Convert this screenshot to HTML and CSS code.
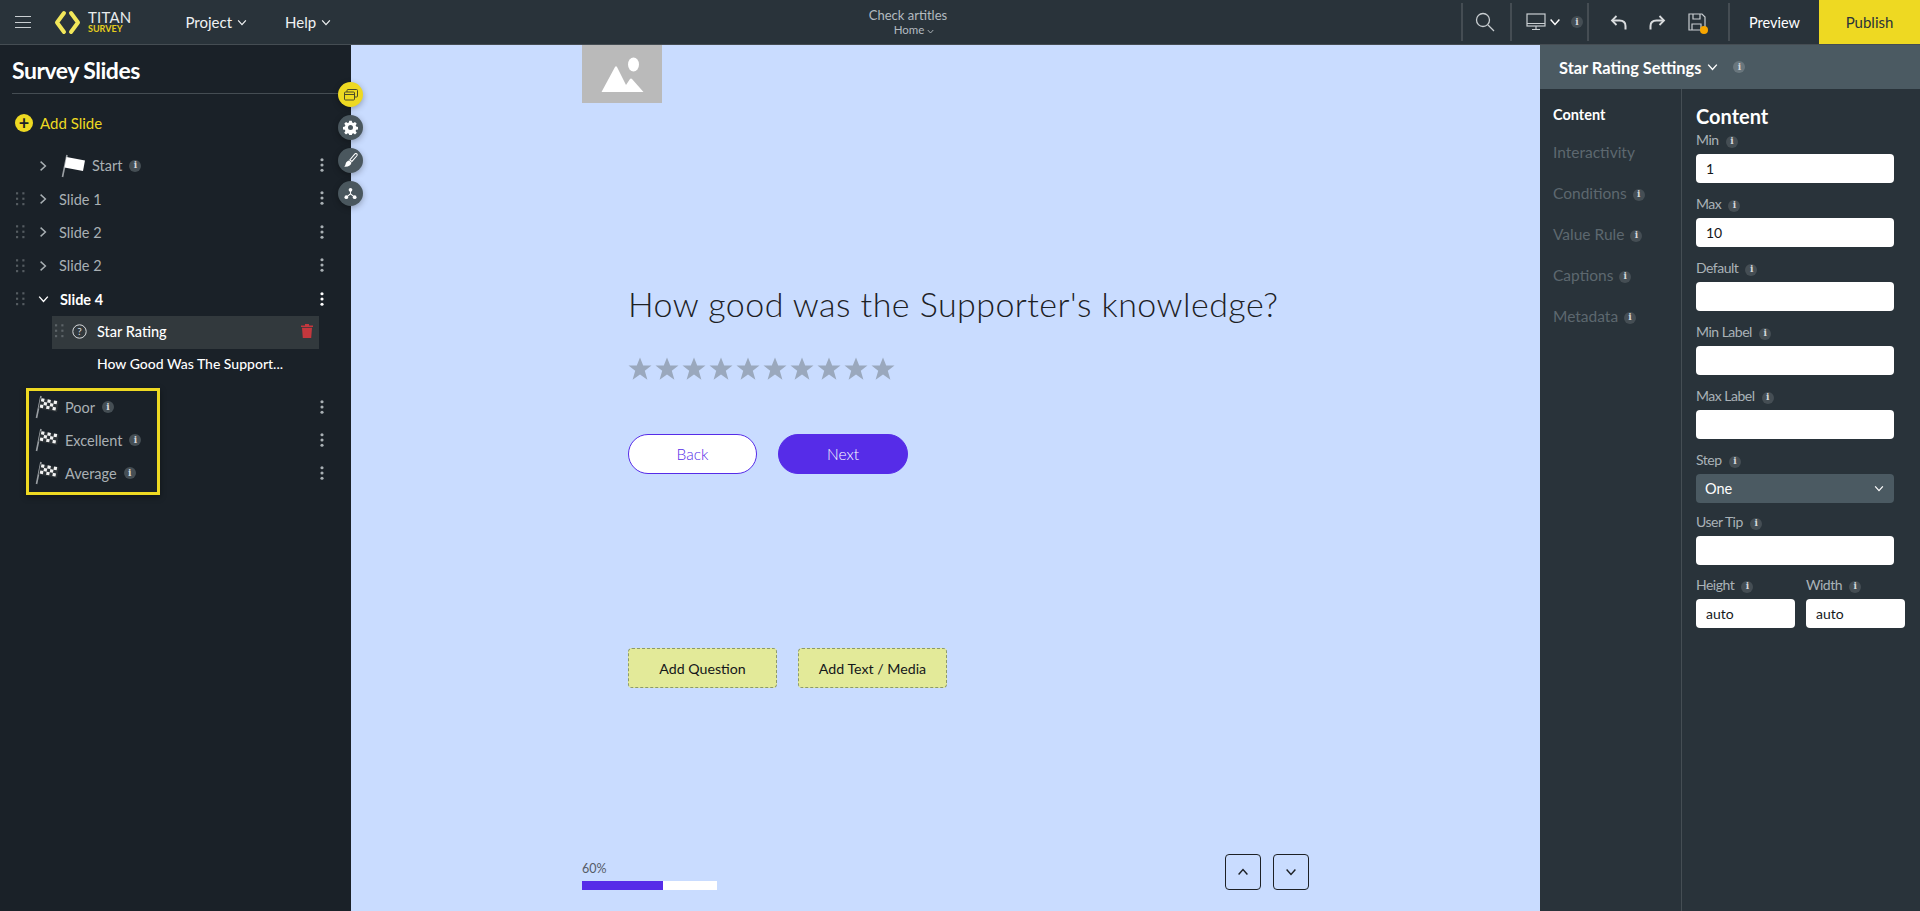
FILE: index.html
```html
<!DOCTYPE html>
<html lang="en">
<head>
  <meta charset="UTF-8">
  <title>Titan Survey</title>
  <link rel="stylesheet" href="styles.css">
</head>
<body>
  <svg class="sprite" xmlns="http://www.w3.org/2000/svg">
    <symbol id="chev-r" viewBox="0 0 10 14"><path d="M2 1.5 8 7l-6 5.5" fill="none" stroke="currentColor" stroke-width="1.8"/></symbol>
    <symbol id="chev-d" viewBox="0 0 14 10"><path d="M1.5 2 7 8l5.5-6" fill="none" stroke="currentColor" stroke-width="1.8"/></symbol>
    <symbol id="kebab" viewBox="0 0 4 16"><circle cx="2" cy="2" r="1.8" fill="currentColor"/><circle cx="2" cy="8" r="1.8" fill="currentColor"/><circle cx="2" cy="14" r="1.8" fill="currentColor"/></symbol>
    <symbol id="grip" viewBox="0 0 10 15"><g fill="currentColor"><rect x="0" y="0" width="2.4" height="2.4"/><rect x="7" y="0" width="2.4" height="2.4"/><rect x="0" y="6" width="2.4" height="2.4"/><rect x="7" y="6" width="2.4" height="2.4"/><rect x="0" y="12" width="2.4" height="2.4"/><rect x="7" y="12" width="2.4" height="2.4"/></g></symbol>
    <symbol id="star" viewBox="0 0 24 24"><path d="M12 .5l3.2 8h8.3l-6.700 5.300 2.600 8.900L12 17.600l-7.400 5.100 2.600-8.900L.5 8.500h8.300z" fill="currentColor"/></symbol>
    <symbol id="flag-check" viewBox="0 0 24 24">
      <path d="M1.5 23 6 1" stroke="#9a9fa3" stroke-width="1.6" fill="none"/>
      <path d="M5.5 3 24 6.500l-2 10.500L3.500 13.500z" fill="#2d3337"/>
      <g transform="translate(5.5 3) rotate(10.5)" fill="#f2f2f2">
        <rect x="1" y="0" width="3.2" height="3.2"/><rect x="7.4" y="0" width="3.2" height="3.2"/><rect x="13.8" y="0" width="3.2" height="3.2"/>
        <rect x="4.2" y="3.2" width="3.2" height="3.2"/><rect x="10.6" y="3.2" width="3.2" height="3.2"/>
        <rect x="1" y="6.4" width="3.2" height="3.2"/><rect x="7.4" y="6.4" width="3.2" height="3.2"/><rect x="13.8" y="6.4" width="3.2" height="3.2"/>
      </g>
    </symbol>
  </svg>

  <header class="topbar">
    <div class="topbar-left">
      <button class="burger"><span></span><span></span><span></span></button>
      <div class="logo">
        <svg width="27" height="25" viewBox="0 0 27 25" fill="none" stroke="#f2e75a" stroke-width="4" stroke-linejoin="round" stroke-linecap="round"><path d="M10 3 3 12.500 10 22"/><path d="M17 3l7 9.500L17 22"/></svg>
        <div class="logo-text"><span class="logo-titan">TITAN</span><span class="logo-survey">SURVEY</span></div>
      </div>
      <nav class="menu">
        <a class="menu-item">Project <svg width="10" height="7"><use href="#chev-d"/></svg></a>
        <a class="menu-item">Help <svg width="10" height="7"><use href="#chev-d"/></svg></a>
      </nav>
    </div>
    <div class="doc-title">
      <div class="doc-name">Check artitles</div>
      <div class="doc-page">Home <svg width="7" height="5"><use href="#chev-d"/></svg></div>
    </div>
    <div class="tools">
      <div class="tool tool-search">
        <svg width="20" height="20" viewBox="0 0 20 20" fill="none" stroke="#c9ced1" stroke-width="1.3"><circle cx="8" cy="8" r="6.5"/><path d="M13 13l6 6"/></svg>
      </div>
      <div class="tool tool-device">
        <svg width="20" height="18" viewBox="0 0 20 18" fill="none" stroke="#c9ced1" stroke-width="1.2"><rect x="1" y="1" width="18" height="12"/><path d="M1 10.500h18M10 13v3M6 16.500h8"/></svg>
        <svg class="device-chev" width="12" height="8"><use href="#chev-d"/></svg>
        <span class="info">i</span>
      </div>
      <div class="tool tool-edit">
        <svg width="17" height="15" viewBox="0 0 17 15" fill="none" stroke="#d9dcde" stroke-width="2"><path d="M15.500 14.500V11c0-3.500-2.500-5.500-6-5.500H2.500"/><path d="M6.500 1 2 5.500 6.500 10" stroke-width="1.8"/></svg>
        <svg width="17" height="15" viewBox="0 0 17 15" fill="none" stroke="#d9dcde" stroke-width="2"><path d="M1.500 14.500V11c0-3.500 2.500-5.500 6-5.500h7"/><path d="M10.500 1 15 5.500 10.500 10" stroke-width="1.8"/></svg>
        <div class="save-icon">
          <svg width="18" height="18" viewBox="0 0 18 18" fill="none" stroke="#c9ced1" stroke-width="1.2"><path d="M1 1h13l3 3v13H1z"/><path d="M5 1v5h7V1M4 17v-6h9v6"/></svg>
          <span class="save-dot"></span>
        </div>
      </div>
      <div class="preview">Preview</div>
      <div class="publish">Publish</div>
    </div>
  </header>

  <main class="workspace">
    <aside class="sidebar">
      <h2 class="side-title">Survey Slides</h2>
      <div class="add-slide">
        <span class="add-dot">+</span>
        Add Slide
      </div>

      <ul class="tree">
        <li class="row">
          <span class="grip-space"></span>
          <svg class="chev" width="8" height="12"><use href="#chev-r"/></svg>
          <svg class="start-flag" width="24" height="24" viewBox="0 0 24 24"><path d="M1.500 23 6 1" stroke="#9a9fa3" stroke-width="1.6" fill="none"/><path d="M5.500 3 24 6.500l-2 10.500L3.500 13.500z" fill="#fff"/></svg>
          <span class="label start-label">Start</span>
          <span class="info">i</span>
          <svg class="kebab" width="4" height="14"><use href="#kebab"/></svg>
        </li>
        <li class="row">
          <svg class="grip" width="9" height="14"><use href="#grip"/></svg>
          <svg class="chev" width="8" height="12"><use href="#chev-r"/></svg>
          <span class="label slide-label">Slide 1</span>
          <svg class="kebab" width="4" height="14"><use href="#kebab"/></svg>
        </li>
        <li class="row">
          <svg class="grip" width="9" height="14"><use href="#grip"/></svg>
          <svg class="chev" width="8" height="12"><use href="#chev-r"/></svg>
          <span class="label slide-label">Slide 2</span>
          <svg class="kebab" width="4" height="14"><use href="#kebab"/></svg>
        </li>
        <li class="row">
          <svg class="grip" width="9" height="14"><use href="#grip"/></svg>
          <svg class="chev" width="8" height="12"><use href="#chev-r"/></svg>
          <span class="label slide-label">Slide 2</span>
          <svg class="kebab" width="4" height="14"><use href="#kebab"/></svg>
        </li>
        <li class="row row-open">
          <svg class="grip" width="9" height="14"><use href="#grip"/></svg>
          <svg class="chev-open" width="11" height="8"><use href="#chev-d"/></svg>
          <span class="label slide-label">Slide 4</span>
          <svg class="kebab" width="4" height="14"><use href="#kebab"/></svg>
        </li>
        <li class="question-row">
          <svg class="grip" width="9" height="14"><use href="#grip"/></svg>
          <svg class="help-icon" width="15" height="15" viewBox="0 0 15 15"><circle cx="7.5" cy="7.5" r="6.7" fill="none" stroke="#d8dbdd" stroke-width="1"/><text x="7.5" y="11" text-anchor="middle" font-size="10" fill="#d8dbdd" font-family="Lato">?</text></svg>
          <span class="question-name">Star Rating</span>
          <svg class="trash" width="12" height="14" viewBox="0 0 12 14" fill="#c4373d"><path d="M0 1.500h12V3H0zM4 0h4v1.500H4zM1 3.800h10L10.200 14H1.800z"/></svg>
        </li>
        <li class="question-text">How Good Was The Support...</li>
        <li class="row row-end">
          <svg class="end-flag" width="24" height="24"><use href="#flag-check"/></svg>
          <span class="label">Poor</span>
          <span class="info">i</span>
          <svg class="kebab" width="4" height="14"><use href="#kebab"/></svg>
        </li>
        <li class="row row-end">
          <svg class="end-flag" width="24" height="24"><use href="#flag-check"/></svg>
          <span class="label">Excellent</span>
          <span class="info">i</span>
          <svg class="kebab" width="4" height="14"><use href="#kebab"/></svg>
        </li>
        <li class="row row-end">
          <svg class="end-flag" width="24" height="24"><use href="#flag-check"/></svg>
          <span class="label">Average</span>
          <span class="info">i</span>
          <svg class="kebab" width="4" height="14"><use href="#kebab"/></svg>
        </li>
      </ul>
      <div class="highlight"></div>

      <div class="float-tools">
        <span class="float-btn float-active">
          <svg width="14" height="13" viewBox="0 0 14 13" fill="none" stroke="#4a4a2a" stroke-width="1"><rect x="0.5" y="4" width="10" height="8" rx="1"/><path d="M3 4V2.500a1 1 0 0 1 1-1h8.500a1 1 0 0 1 1 1V8a1 1 0 0 1-1 1h-2"/><path d="M0.500 6.500h10"/></svg>
        </span>
        <span class="float-btn">
          <svg width="15" height="15" viewBox="0 0 24 24"><path fill="#fff" fill-rule="evenodd" d="M10 1h4l.6 3.100 2 .8 2.600-1.800 2.800 2.800-1.800 2.600.8 2 3 .5v4l-3 .6-.8 2 1.800 2.600-2.800 2.800-2.600-1.800-2 .8-.6 3h-4l-.6-3-2-.8-2.600 1.800-2.800-2.800 1.800-2.600-.8-2-3-.6v-4l3-.5.8-2-1.800-2.600 2.800-2.800 2.600 1.800 2-.8zM12 8a4 4 0 1 0 0 8 4 4 0 0 0 0-8z"/></svg>
        </span>
        <span class="float-btn">
          <svg width="15" height="15" viewBox="0 0 16 16"><path d="M14.500.8c.8.500.8 1.400.3 2.100L9.500 9 7.300 7.300 12.500 1.200c.5-.6 1.300-.8 2-.4z" fill="none" stroke="#fff" stroke-width="1.1"/><path d="M6.600 8 9 10c-.3 2.800-3 5-8 4.500 1.500-.8 1.500-2 2-3.500.5-1.500 2-2.700 3.600-3z" fill="#fff"/></svg>
        </span>
        <span class="float-btn">
          <svg width="13" height="13" viewBox="0 0 14 14" fill="#fff"><circle cx="7" cy="3" r="2"/><circle cx="2.5" cy="11" r="2"/><circle cx="11.5" cy="11" r="2"/><path d="M6.500 4h1v3l3.500 3-.7.700L7 8 3.700 10.700 3 10l3.500-3z"/></svg>
        </span>
      </div>
    </aside>

    <section class="canvas">
      <div class="img-holder">
        <svg width="44" height="38" viewBox="0 0 44 38" fill="#fff"><ellipse cx="33.5" cy="9.5" rx="5.5" ry="7"/><path d="M1.500 37 15 12c.5-1 1.500-1 2 0l9 18 4-6c.5-.8 1.500-.8 2 0l11.500 13z"/></svg>
      </div>
      <div class="survey">
        <h1 class="question">How good was the Supporter's knowledge?</h1>
        <div class="stars">
          <svg width="24" height="24"><use href="#star"/></svg>
          <svg width="24" height="24"><use href="#star"/></svg>
          <svg width="24" height="24"><use href="#star"/></svg>
          <svg width="24" height="24"><use href="#star"/></svg>
          <svg width="24" height="24"><use href="#star"/></svg>
          <svg width="24" height="24"><use href="#star"/></svg>
          <svg width="24" height="24"><use href="#star"/></svg>
          <svg width="24" height="24"><use href="#star"/></svg>
          <svg width="24" height="24"><use href="#star"/></svg>
          <svg width="24" height="24"><use href="#star"/></svg>
        </div>
        <div class="pager">
          <button class="btn-back">Back</button>
          <button class="btn-next">Next</button>
        </div>
        <div class="add-row">
          <button class="btn-add">Add Question</button>
          <button class="btn-add">Add Text / Media</button>
        </div>
      </div>
      <div class="canvas-foot">
        <div class="progress">
          <div class="progress-label">60%</div>
          <div class="progress-track"><div class="progress-fill" style="width: 60%"></div></div>
        </div>
        <div class="arrows">
          <button class="arrow"><svg width="12" height="8" class="flip"><use href="#chev-d"/></svg></button>
          <button class="arrow"><svg width="12" height="8"><use href="#chev-d"/></svg></button>
        </div>
      </div>
    </section>

    <aside class="settings">
      <div class="settings-head">
        Star Rating Settings
        <svg width="11" height="8"><use href="#chev-d"/></svg>
        <span class="info info-head">i</span>
      </div>
      <div class="settings-body">
        <ul class="settings-nav">
          <li class="active">Content</li>
          <li>Interactivity</li>
          <li>Conditions <span class="info">i</span></li>
          <li>Value Rule <span class="info">i</span></li>
          <li>Captions <span class="info">i</span></li>
          <li>Metadata <span class="info">i</span></li>
        </ul>
        <form class="settings-form">
          <h3>Content</h3>
          <div class="field"><label>Min <span class="info">i</span></label><input value="1"></div>
          <div class="field"><label>Max <span class="info">i</span></label><input value="10"></div>
          <div class="field"><label>Default <span class="info">i</span></label><input></div>
          <div class="field"><label>Min Label <span class="info">i</span></label><input></div>
          <div class="field"><label>Max Label <span class="info">i</span></label><input></div>
          <div class="field field-step"><label>Step <span class="info">i</span></label>
            <div class="select">One <svg width="10" height="7"><use href="#chev-d"/></svg></div>
          </div>
          <div class="field field-tip"><label>User Tip <span class="info">i</span></label><input></div>
          <div class="field-pair">
            <div class="field"><label>Height <span class="info">i</span></label><input value="auto"></div>
            <div class="field"><label>Width <span class="info">i</span></label><input value="auto"></div>
          </div>
        </form>
      </div>
    </aside>
  </main>
</body>
</html>
```

FILE: styles.css
```css
* {
  box-sizing: border-box;
}
html, body {
  margin: 0;
  height: 100%;
}
body {
  display: flex;
  flex-direction: column;
  overflow: hidden;
  background: #1a2128;
  color: #fff;
  font-family: Lato, 'Liberation Sans', sans-serif;
  font-size: 14px;
}
ul {
  list-style: none;
  margin: 0;
  padding: 0;
}
button {
  font-family: inherit;
  cursor: pointer;
}
.sprite {
  display: none;
}

.info {
  display: inline-flex;
  align-items: center;
  justify-content: center;
  width: 12px;
  height: 12px;
  border-radius: 50%;
  background: #454e54;
  color: #d5d8da;
  font-family: 'DejaVu Serif', serif;
  font-size: 9px;
  font-weight: bold;
  line-height: 1;
}

/* top bar */
.topbar {
  display: flex;
  align-items: center;
  flex: 0 0 45px;
  height: 45px;
  background: #29333a;
  border-bottom: 1px solid #454d53;
}
.topbar-left {
  display: flex;
  align-items: center;
  flex: 0 0 808px;
}
.burger {
  display: flex;
  flex-direction: column;
  gap: 4.5px;
  width: 16px;
  margin-left: 15px;
  padding: 0;
  border: 0;
  background: none;
}
.burger span {
  display: block;
  height: 1px;
  background: #c9ced1;
}
.logo {
  display: flex;
  align-items: center;
  gap: 7px;
  margin-left: 23px;
}
.logo-text {
  display: flex;
  flex-direction: column;
  line-height: 1;
}
.logo-titan {
  font-size: 15px;
  line-height: 13px;
  letter-spacing: 0.2px;
  color: #e8ebec;
}
.logo-survey {
  font-size: 9px;
  line-height: 10px;
  font-weight: bold;
  color: #e5cd1d;
}
.menu {
  display: flex;
  gap: 38px;
  margin-left: 54px;
}
.menu-item {
  display: flex;
  align-items: center;
  gap: 5px;
  font-size: 15px;
  color: #f0f2f3;
}
.doc-title {
  flex: 0 0 200px;
  text-align: center;
  color: #b3bbc0;
}
.doc-name {
  font-size: 13px;
  line-height: 16px;
}
.doc-page {
  padding-left: 12px;
  font-size: 11.5px;
  line-height: 14px;
}
.tools {
  display: flex;
  align-items: stretch;
  margin-left: auto;
  height: 44px;
}
.tool {
  display: flex;
  align-items: center;
  margin: 3px 0;
  border-left: 2px solid #454d53;
}
.tool-search {
  width: 49px;
  padding-left: 12px;
}
.tool-device {
  width: 77px;
  padding-left: 14px;
  gap: 3px;
}
.device-chev {
  color: #fff;
}
.tool-device .info {
  margin-left: 7px;
}
.tool-edit {
  width: 141px;
  padding-left: 21px;
  gap: 22px;
}
.save-icon {
  position: relative;
  display: flex;
}
.save-dot {
  position: absolute;
  right: -2px;
  bottom: -3px;
  width: 8px;
  height: 8px;
  border-radius: 50%;
  background: #f7a600;
}
.preview {
  display: flex;
  align-items: center;
  justify-content: center;
  width: 91px;
  margin: 3px 0;
  border-left: 2px solid #454d53;
  font-size: 14.5px;
}
.publish {
  display: flex;
  align-items: center;
  justify-content: center;
  width: 101px;
  background: #eed922;
  color: #29333a;
  font-size: 15px;
}

.workspace {
  display: flex;
  flex: 1;
  min-height: 0;
}

/* left sidebar */
.sidebar {
  position: relative;
  flex: 0 0 351px;
  background: #1a2128;
}
.side-title {
  margin: 0 11px 0 12px;
  height: 49px;
  padding-top: 9px;
  border-bottom: 1px solid #454d53;
  font-size: 23px;
  line-height: 32px;
  font-weight: bold;
  letter-spacing: -0.5px;
}
.add-slide {
  display: flex;
  align-items: center;
  gap: 7px;
  height: 34px;
  margin: 12px 0 9px 15px;
  color: #eed922;
  font-size: 15px;
}
.add-dot {
  display: flex;
  align-items: center;
  justify-content: center;
  width: 18px;
  height: 18px;
  border-radius: 50%;
  background: #eed922;
  color: #1a2128;
  font-size: 18px;
  font-weight: bold;
  line-height: 1;
}
.row {
  position: relative;
  display: flex;
  align-items: center;
  height: 33.4px;
  padding-left: 16px;
  color: #a9b0b4;
}
.grip {
  flex: none;
  color: #555c61;
}
.grip-space {
  flex: none;
  width: 9px;
}
.chev {
  flex: none;
  margin-left: 14px;
  color: #a9b0b4;
}
.chev-open {
  flex: none;
  margin-left: 13px;
  margin-right: -1px;
  color: #fff;
}
.label {
  font-size: 14.5px;
}
.slide-label {
  margin-left: 12px;
}
.start-flag {
  flex: none;
  margin-left: 14px;
}
.start-label {
  margin-left: 7px;
}
.row .info {
  margin-left: 7px;
}
.kebab {
  position: absolute;
  left: 320px;
  top: 9px;
  color: #a9b0b4;
}
.row-open {
  color: #fff;
  font-weight: bold;
}
.row-open .kebab {
  color: #fff;
}
.question-row {
  display: flex;
  align-items: center;
  width: 267px;
  height: 33px;
  margin-left: 52px;
  padding: 0 0 2px 3px;
  background: #32393d;
}
.question-row .grip {
  color: #5d6468;
}
.help-icon {
  flex: none;
  margin-left: 8px;
}
.question-name {
  margin-left: 10px;
  font-size: 14.5px;
  font-weight: 500;
}
.trash {
  margin-left: auto;
  margin-right: 6px;
}
.question-text {
  height: 30px;
  margin-bottom: 12px;
  padding-left: 97px;
  font-size: 14px;
  font-weight: 500;
  line-height: 30px;
}
.row-end {
  height: 33px;
  padding-left: 35px;
}
.end-flag {
  flex: none;
}
.row-end .label {
  margin-left: 6px;
}
/* yellow marker round the three end screens */
.highlight {
  position: absolute;
  left: 26px;
  top: 343px;
  width: 134px;
  height: 107px;
  border: 3px solid #eed922;
  box-shadow: 0 2px 6px rgba(0, 0, 0, 0.4);
}
.float-tools {
  position: absolute;
  left: 338px;
  top: 37px;
  z-index: 2;
  display: flex;
  flex-direction: column;
  gap: 8px;
}
.float-btn {
  display: flex;
  align-items: center;
  justify-content: center;
  width: 25px;
  height: 25px;
  border-radius: 50%;
  background: #4a575e;
  box-shadow: 0 2px 6px rgba(0, 0, 0, 0.3);
}
.float-active {
  background: #eed922;
}

/* survey canvas */
.canvas {
  display: flex;
  flex-direction: column;
  flex: 1;
  min-width: 0;
  background: #c9dcff;
}
.img-holder {
  display: flex;
  align-items: center;
  justify-content: center;
  width: 80px;
  height: 58px;
  margin-left: 231px;
  background: #bababa;
}
.survey {
  margin-left: 277px;
}
.question {
  margin: 179px 0 0;
  font-size: 34px;
  line-height: 44px;
  font-weight: 300;
  letter-spacing: 0.45px;
  color: #1d2125;
  white-space: nowrap;
}
.stars {
  display: flex;
  gap: 3px;
  margin-top: 31px;
  color: #9aa8bd;
}
.pager {
  display: flex;
  gap: 21px;
  margin-top: 53px;
}
.btn-back,
.btn-next {
  height: 40px;
  border-radius: 20px;
  font-size: 15.5px;
  font-weight: 300;
}
.btn-back {
  width: 129px;
  border: 1px solid #562ce8;
  background: #fff;
  color: #562ce8;
}
.btn-next {
  width: 130px;
  border: 1px solid #562ce8;
  background: #562ce8;
  color: #fff;
}
.add-row {
  display: flex;
  gap: 21px;
  margin-top: 174px;
}
.btn-add {
  width: 149px;
  height: 40px;
  border: 1px dashed #8d9a6a;
  border-radius: 4px;
  background: #e3ea99;
  color: #14171a;
  font-size: 14.2px;
}
.canvas-foot {
  display: flex;
  justify-content: space-between;
  align-items: flex-end;
  margin: auto 0 21px 231px;
  padding-right: 231px;
}
.progress {
  width: 135px;
}
.progress-label {
  font-size: 12.5px;
  line-height: 15px;
  color: #555b66;
}
.progress-track {
  height: 9px;
  margin-top: 5px;
  background: #fff;
}
.progress-fill {
  height: 100%;
  background: #562ce8;
}
.arrows {
  display: flex;
  gap: 12px;
}
.arrow {
  display: flex;
  align-items: center;
  justify-content: center;
  width: 36px;
  height: 36px;
  padding: 0;
  border: 1px solid #1d2125;
  border-radius: 4px;
  background: none;
  color: #1d2125;
}
.flip {
  transform: rotate(180deg);
}

/* right settings panel */
.settings {
  display: flex;
  flex-direction: column;
  flex: 0 0 380px;
  background: #29333a;
}
.settings-head {
  display: flex;
  align-items: center;
  flex: 0 0 44px;
  gap: 6px;
  padding-left: 19px;
  background: #4b5a62;
  font-size: 16.4px;
  font-weight: bold;
}
.info-head {
  margin-left: 9px;
  background: #69767d;
}
.settings-body {
  display: flex;
  flex: 1;
}
.settings-nav {
  flex: 0 0 142px;
  padding: 16px 0 0 13px;
  border-right: 1px solid #454e54;
  color: #5d686f;
  font-size: 15.5px;
}
.settings-nav li {
  height: 41px;
  line-height: 20px;
}
.settings-nav .active {
  height: 37px;
  color: #fff;
  font-weight: bold;
  font-size: 14.5px;
}
.settings-nav .info {
  position: relative;
  top: -2px;
  margin-left: 2px;
}
.settings-form {
  padding: 15px 0 0 14px;
  width: 238px;
}
.settings-form h3 {
  margin: 0 0 4px;
  font-size: 20px;
  line-height: 24px;
  font-weight: bold;
}
.field {
  margin-bottom: 13px;
}
.field-step {
  margin-bottom: 11px;
}
.field-tip {
  margin-bottom: 12px;
}
.field label {
  display: block;
  height: 17px;
  margin-bottom: 5px;
  color: #aab2b7;
  font-size: 14px;
  letter-spacing: -0.5px;
  line-height: 16px;
}
.field label .info {
  position: relative;
  top: -1px;
  margin-left: 4px;
}
.field input {
  display: block;
  width: 198px;
  height: 29px;
  padding: 0 10px;
  border: 0;
  border-radius: 4px;
  background: #fff;
  color: #14171a;
  font-family: Lato, sans-serif;
  font-size: 14px;
}
.select {
  display: flex;
  align-items: center;
  justify-content: space-between;
  width: 198px;
  height: 29px;
  padding: 0 10px 0 9px;
  border-radius: 4px;
  background: #4b5a62;
  font-size: 14.5px;
}
.field-pair {
  display: flex;
  gap: 11px;
}
.field-pair input {
  width: 99px;
}
```
